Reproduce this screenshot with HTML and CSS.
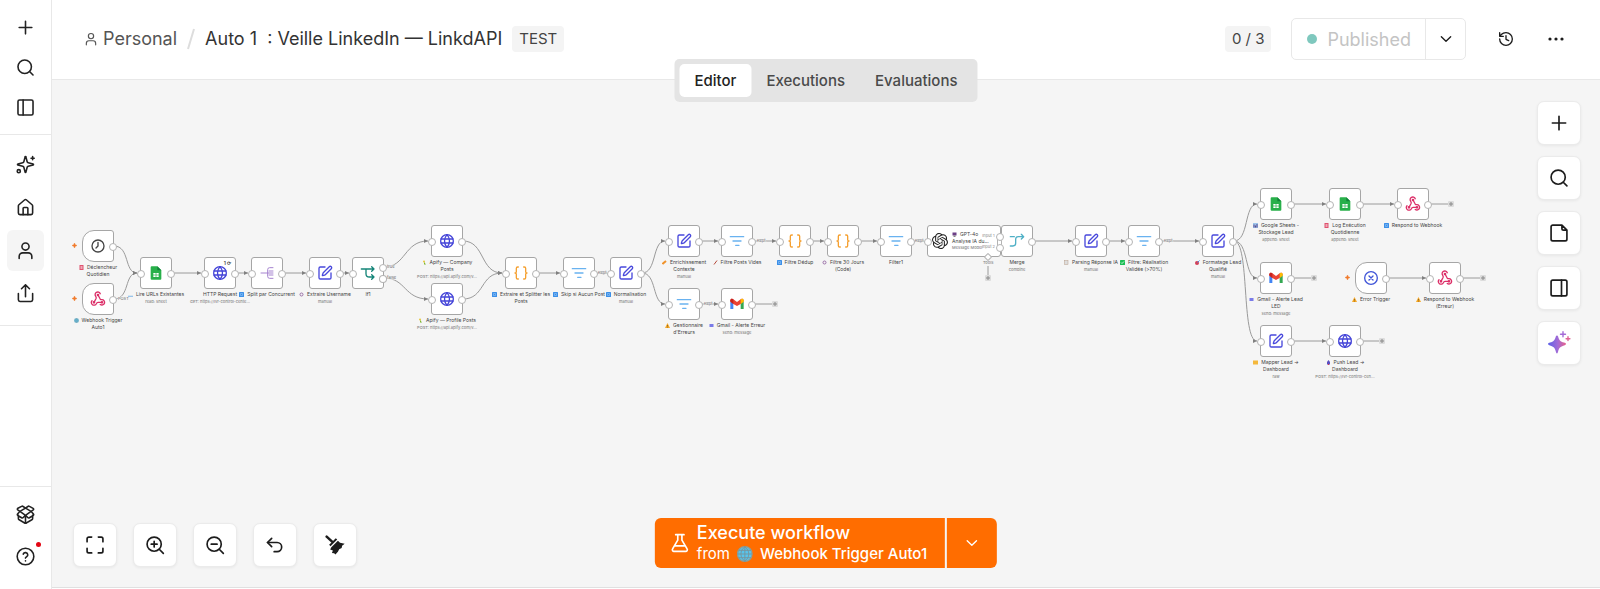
FILE: index.html
```html
<!DOCTYPE html>
<html lang="fr">
<head>
<meta charset="utf-8">
<meta name="viewport" content="width=device-width, initial-scale=1">
<title>Auto 1 : Veille LinkedIn — LinkdAPI</title>
<link rel="stylesheet" href="styles.css">
</head>
<body>
<svg class="sprite" aria-hidden="true">
  <defs>
    <linearGradient id="ai" x1="0" y1="0" x2="1" y2="0"><stop offset="0" stop-color="#5b60e8"/><stop offset=".55" stop-color="#a36bd6"/><stop offset="1" stop-color="#e8608a"/></linearGradient>
    <marker id="arrow" viewBox="0 0 4 4" refX="4" refY="2" markerWidth="4" markerHeight="4" markerUnits="userSpaceOnUse" orient="auto"><path d="M0 0L4 2L0 4Z" fill="#808080"/></marker>
    <symbol id="plus" viewBox="0 0 24 24"><path d="M4 12h16M12 4v16"/></symbol>
    <symbol id="search" viewBox="0 0 24 24"><circle cx="11" cy="11" r="8.500"/><path d="m21.500 21.500-4.400-4.400"/></symbol>
    <symbol id="panel-left" viewBox="0 0 24 24"><rect x="2.500" y="2.500" width="19" height="19" rx="2"/><path d="M9 2.500v19"/></symbol>
    <symbol id="panel-right" viewBox="0 0 24 24"><rect x="2.500" y="2.500" width="19" height="19" rx="2"/><path d="M15 2.500v19"/></symbol>
    <symbol id="sparkles" viewBox="0 0 24 24"><path d="M9.900 15.500A2 2 0 0 0 8.500 14.100l-6.100-1.600a.5.5 0 0 1 0-1L8.500 9.900A2 2 0 0 0 9.900 8.500l1.600-6.100a.5.5 0 0 1 1 0l1.600 6.100a2 2 0 0 0 1.400 1.400l6.100 1.600a.5.5 0 0 1 0 1l-6.100 1.600a2 2 0 0 0-1.400 1.400l-1.600 6.100a.5.5 0 0 1-1 0z"/><path d="M21 2v4M23 4h-4"/><circle cx="3.500" cy="20.500" r="2"/></symbol>
    <symbol id="home" viewBox="0 0 24 24"><path d="M15 21v-8a1 1 0 0 0-1-1h-4a1 1 0 0 0-1 1v8"/><path d="M3 10a2 2 0 0 1 .7-1.500l7-6a2 2 0 0 1 2.600 0l7 6A2 2 0 0 1 21 10v9a2 2 0 0 1-2 2H5a2 2 0 0 1-2-2z"/></symbol>
    <symbol id="user" viewBox="0 0 24 24"><circle cx="12" cy="7" r="4.500"/><path d="M4 22v-2.500a4.500 4.500 0 0 1 4.500-4.500h7a4.500 4.500 0 0 1 4.500 4.500V22"/></symbol>
    <symbol id="share" viewBox="0 0 24 24"><path d="M12 16V2M7 6l5-5 5 5M3 12v8a2 2 0 0 0 2 2h14a2 2 0 0 0 2-2v-8"/></symbol>
    <symbol id="box" viewBox="0 0 24 24"><path d="M12 22V13M15.200 21.400l4.800-2.700a2 2 0 0 0 1-1.700v-4M3 13v4a2 2 0 0 0 1 1.700l6.900 4a2 2 0 0 0 2.200 0l2.100-1.300M12 13l-2.900 2.800a1.600 1.600 0 0 1-2 .3L2.200 13.200a1.200 1.200 0 0 1-.2-1.800L5 8l7 5 7-5 3 3.400a1.200 1.200 0 0 1-.2 1.800l-4.900 2.900a1.600 1.600 0 0 1-2-.3zM5 8 2.200 6.200a1.200 1.200 0 0 1 .2-2L7 1.700a1.600 1.600 0 0 1 2 .2L12 4l3-2.100a1.600 1.600 0 0 1 2-.2l4.600 2.500a1.200 1.200 0 0 1 .2 2L19 8l-7-4z"/></symbol>
    <symbol id="help" viewBox="0 0 24 24"><circle cx="12" cy="12" r="10.500"/><path d="M9.100 9a3 3 0 0 1 5.800 1c0 2-3 2.600-3 4M12 17.500v.1"/></symbol>
    <symbol id="chevron" viewBox="0 0 24 24"><path d="m5 8.500 7 7 7-7"/></symbol>
    <symbol id="history" viewBox="0 0 24 24"><path d="M2.500 12A9.500 9.500 0 1 0 12 2.500a10.300 10.300 0 0 0-7.100 2.900L2.500 8M2.500 2.500V8H8M12 7v5.500l4 2"/></symbol>
    <symbol id="dots" viewBox="0 0 24 24"><g fill="currentColor" stroke="none"><circle cx="3" cy="12" r="2.400"/><circle cx="12" cy="12" r="2.400"/><circle cx="21" cy="12" r="2.400"/></g></symbol>
    <symbol id="note" viewBox="0 0 24 24"><path d="M15.500 2.500H4.500a2 2 0 0 0-2 2v15a2 2 0 0 0 2 2h15a2 2 0 0 0 2-2v-11zM15.500 2.500v4a2 2 0 0 0 2 2h4"/></symbol>
    <symbol id="ai-star" viewBox="0 0 24 24"><g fill="url(#ai)" stroke="none"><path d="M10 4.500c.5 0 .9.300 1.100 1 .9 3.700 2.200 5 5.900 6.100 1 .3 2 .8 2 1.400s-1 1.100-2 1.400c-3.700 1.100-5 2.400-5.900 6.100-.3 1-.6 2-1.100 2s-.9-1-1.200-2c-.9-3.700-2.100-5-5.800-6.100-1-.3-2-.8-2-1.400s1-1.100 2-1.400c3.700-1.100 4.900-2.400 5.800-6.100.2-.7.700-1 1.200-1z"/></g><path d="M16 .8v5M13.500 3.300h5" stroke="#a36bd6" stroke-width="1.400"/><path d="M21 5.800v3.800M19.100 7.700h3.800" stroke="#df6395" stroke-width="1.400"/></symbol>
    <symbol id="fit" viewBox="0 0 24 24"><path d="M8 2.500H4.500a2 2 0 0 0-2 2V8M21.500 8V4.500a2 2 0 0 0-2-2H16M2.500 16v3.500a2 2 0 0 0 2 2H8M16 21.500h3.500a2 2 0 0 0 2-2V16"/></symbol>
    <symbol id="zoom-in" viewBox="0 0 24 24"><circle cx="11" cy="11" r="8.500"/><path d="m22 22-4.900-4.900M11 7.500v7M7.500 11h7"/></symbol>
    <symbol id="zoom-out" viewBox="0 0 24 24"><circle cx="11" cy="11" r="8.500"/><path d="m22 22-4.900-4.900M7.500 11h7"/></symbol>
    <symbol id="undo" viewBox="0 0 24 24"><path d="M8 14 3 9l5-5"/><path d="M3 9h11.500a5.500 5.500 0 0 1 0 11H11"/></symbol>
    <symbol id="broom" viewBox="0 0 24 24"><path d="M2 2 8.500 8" stroke-width="3"/><path d="M13.800 4.600 5.800 12.600" stroke-width="2.400" stroke-linecap="butt"/><path d="M15.500 6.800 18 9.200 23.600 10.600 20.500 13 20 15.500 17 17 15.500 20 12.500 23.500 11 21.800 8.300 21.500 9.500 18.500 6.200 17.500 7.600 14.700z" fill="currentColor" stroke="none"/></symbol>
    <symbol id="flask" viewBox="0 0 24 24"><path d="M14.500 2v6.500l6.200 10.600A1.900 1.900 0 0 1 19 22H5a1.900 1.900 0 0 1-1.700-2.900L9.500 8.500V2M7 2h10M6.500 15.500h11"/></symbol>
    <symbol id="globe-emoji" viewBox="0 0 24 24"><circle cx="12" cy="12" r="11" fill="#58c4ec" stroke="#8a9f9b"/><path d="M12 1v22M1 12h22M3 6.500h18M3 17.500h18M12 1c-8 6-8 16 0 22M12 1c8 6 8 16 0 22" stroke="#7a9298" stroke-width="1.300"/></symbol>

    <symbol id="n-clock" viewBox="0 0 24 24"><circle cx="12" cy="12" r="9" stroke="#444"/><path d="M12 6.500V12l-3 3" stroke="#444"/></symbol>
    <symbol id="n-hook" viewBox="0 0 24 24"><g stroke="#dc2f68"><path d="M18 17h-6c-1.100 0-2 .9-2.500 2A4 4 0 1 1 3 14.500"/><circle cx="6" cy="17" r="1"/><path d="m6 17 3.100-5.800c.5-1 .1-2.200-.5-3.100a4 4 0 1 1 6.800-4"/><circle cx="12" cy="6" r="1"/><path d="m12 6 3.100 5.700c.6 1 1.700 1.300 2.800 1.300a4 4 0 1 1-2.500 7.100"/><circle cx="18" cy="17" r="1"/></g></symbol>
    <symbol id="n-sheet" viewBox="0 0 24 24"><path d="M4 3.500A1.500 1.500 0 0 1 5.500 2H14l6 6v12.500a1.500 1.500 0 0 1-1.500 1.500h-13A1.500 1.500 0 0 1 4 20.500z" fill="#28b04a" stroke="none"/><path d="M14 2l6 6h-6z" fill="#12823a" stroke="none"/><rect x="8" y="12" width="8" height="6" fill="#fff" stroke="none"/><path d="M8 15h8M12 12v6" stroke="#28b04a" stroke-width="1"/></symbol>
    <symbol id="n-globe" viewBox="0 0 24 24"><g stroke="#4343d8"><circle cx="12" cy="12" r="9.500"/><path d="M12 2.500a14 14 0 0 0 0 19 14 14 0 0 0 0-19M3 9h18M3 15h18"/></g></symbol>
    <symbol id="n-split" viewBox="0 0 24 24"><path d="M3 12h18M21 4h-5a3 3 0 0 0-3 3v10a3 3 0 0 0 3 3h5M15 9h6M15 15h6" stroke="#a583cf" stroke-width="1.500"/></symbol>
    <symbol id="n-edit" viewBox="0 0 24 24"><g stroke="#4848dc"><path d="M12 3H5a2 2 0 0 0-2 2v14a2 2 0 0 0 2 2h14a2 2 0 0 0 2-2v-7"/><path d="M18.400 2.600a2.100 2.100 0 0 1 3 3l-9 9a2 2 0 0 1-.9.500l-2.900.9a.5.5 0 0 1-.6-.6l.9-2.900a2 2 0 0 1 .5-.9z"/></g></symbol>
    <symbol id="n-if" viewBox="0 0 24 24"><path d="M2 6h19M17.500 2.500 21 6l-3.500 3.500M9 6v7a5 5 0 0 0 5 5h7M17.500 14.500 21 18l-3.500 3.500" stroke="#158578"/></symbol>
    <symbol id="n-code" viewBox="0 0 24 24"><path d="M8 3H7a2 2 0 0 0-2 2v5a2 2 0 0 1-2 2 2 2 0 0 1 2 2v5a2 2 0 0 0 2 2h1M16 21h1a2 2 0 0 0 2-2v-5a2 2 0 0 1 2-2 2 2 0 0 1-2-2V5a2 2 0 0 0-2-2h-1" stroke="#f5a030"/></symbol>
    <symbol id="n-filter" viewBox="0 0 24 24"><path d="M2 5.500h20M6 12h12M10 18.500h5" stroke="#69b2f0"/></symbol>
    <symbol id="n-gmail" viewBox="0 0 24 24"><g stroke="none"><path d="M2 8v11.500h4.500V11z" fill="#4285f4"/><path d="M22 8v11.500h-4.500V11z" fill="#34a853"/><path d="M2 6.500C2 4 4.600 3.500 6 4.600l6 4.500 6-4.500c1.400-1.100 4-.6 4 1.900V8l-4.500 4L12 15l-5.500-3L2 8z" fill="#ea4335"/><path d="M17.500 5v7L22 8.500v-2C22 4 19.500 3.400 17.500 5z" fill="#fbbc04"/><path d="M2 6.500v2L6.500 12V5C4.500 3.500 2 4 2 6.500z" fill="#c5221f"/></g></symbol>
    <symbol id="n-openai" viewBox="0 0 24 24"><path d="M22.282 9.821a5.985 5.985 0 0 0-.516-4.910 6.046 6.046 0 0 0-6.510-2.900A6.065 6.065 0 0 0 4.981 4.180a5.985 5.985 0 0 0-3.998 2.900 6.046 6.046 0 0 0 .743 7.097 5.980 5.980 0 0 0 .510 4.911 6.051 6.051 0 0 0 6.515 2.900A5.985 5.985 0 0 0 13.260 24a6.056 6.056 0 0 0 5.772-4.206 5.990 5.990 0 0 0 3.998-2.900 6.056 6.056 0 0 0-.748-7.073zm-9.022 12.609a4.476 4.476 0 0 1-2.876-1.041l.142-.080 4.778-2.758a.795.795 0 0 0 .393-.681v-6.737l2.020 1.169a.071.071 0 0 1 .038.052v5.583a4.504 4.504 0 0 1-4.495 4.493zM3.600 18.304a4.471 4.471 0 0 1-.535-3.014l.142.085 4.783 2.758a.771.771 0 0 0 .780 0l5.843-3.368v2.332a.080.080 0 0 1-.033.062L9.740 19.950a4.500 4.500 0 0 1-6.140-1.646zM2.341 7.896a4.485 4.485 0 0 1 2.365-1.973V11.600a.766.766 0 0 0 .388.676l5.815 3.355-2.020 1.168a.076.076 0 0 1-.071 0l-4.830-2.786A4.504 4.504 0 0 1 2.341 7.872zm16.596 3.856-5.833-3.387L15.119 7.200a.076.076 0 0 1 .071 0l4.830 2.791a4.494 4.494 0 0 1-.676 8.105v-5.678a.790.790 0 0 0-.407-.667zm2.010-3.023-.141-.085-4.774-2.782a.776.776 0 0 0-.785 0L9.409 9.230V6.897a.066.066 0 0 1 .028-.061l4.830-2.787a4.500 4.500 0 0 1 6.680 4.660zM8.307 12.863l-2.020-1.164a.080.080 0 0 1-.038-.057V6.074a4.500 4.500 0 0 1 7.375-3.453l-.142.080L8.704 5.459a.795.795 0 0 0-.393.681zm1.097-2.365 2.602-1.500 2.607 1.500v3l-2.597 1.500-2.607-1.500z" fill="#222" stroke="none"/></symbol>
    <symbol id="n-merge" viewBox="0 0 24 24"><path d="M2 19.500h4a4 4 0 0 0 4-4V9a4 4 0 0 1 4-3.500h8M18.500 2 22 5.500 18.500 9M2 5.500h6" stroke="#4fb0c6"/></symbol>
    <symbol id="n-error" viewBox="0 0 24 24"><path d="m9 9 6 6M15 9l-6 6" stroke="#4055d8"/><circle cx="12" cy="12" r="9.500" stroke="#4055d8"/></symbol>

    <symbol id="e-red" viewBox="0 0 10 10"><rect x="1" width="8" height="10" fill="#e0526f"/><path d="M3 3h4M3 5h4M3 7h4" stroke="#fff"/></symbol>
    <symbol id="e-chart" viewBox="0 0 10 10"><path d="M0 8.500h10" stroke="#7db5e6" stroke-width="2"/></symbol>
    <symbol id="e-key" viewBox="0 0 10 10"><rect width="10" height="10" rx="1" fill="#3b8fe8"/><path d="M3 3h4v4H3z" stroke="#a9d0f8"/></symbol>
    <symbol id="e-gear" viewBox="0 0 10 10"><circle cx="5" cy="5" r="3" stroke="#9a70a8" stroke-width="2"/></symbol>
    <symbol id="e-leaf" viewBox="0 0 10 10"><path d="M4 1v8h4L5 5z" fill="#7bb62f"/><circle cx="4" cy="3" r="2" fill="#e7c93c"/></symbol>
    <symbol id="e-link" viewBox="0 0 10 10"><path d="M1 8 8 2" stroke="#f0932b" stroke-width="4"/></symbol>
    <symbol id="e-brush" viewBox="0 0 10 10"><path d="M2 9 8 1" stroke="#b5483a" stroke-width="2"/></symbol>
    <symbol id="e-warn" viewBox="0 0 10 10"><path d="M5 0 10 10H0z" fill="#f5a623"/><path d="M5 4v3M5 8v1" stroke="#333"/></symbol>
    <symbol id="e-mail" viewBox="0 0 10 10"><rect x="1" y="2" width="8" height="6" fill="#7a7be8"/></symbol>
    <symbol id="e-robot" viewBox="0 0 10 10"><rect x="1" y="1" width="8" height="6" fill="#6c3f86"/><rect x="3" y="7" width="4" height="3" fill="#888"/></symbol>
    <symbol id="e-doc" viewBox="0 0 10 10"><rect x="1" y="1" width="7" height="8" fill="#ddd" stroke="#b79d8a"/></symbol>
    <symbol id="e-check" viewBox="0 0 10 10"><rect width="10" height="10" rx="1" fill="#1dbf56"/><path d="m2 5 2 2 4-4" stroke="#fff" stroke-width="1.500"/></symbol>
    <symbol id="e-target" viewBox="0 0 10 10"><circle cx="4" cy="6" r="4" fill="#d23f57"/><path d="m5 5 4-4" stroke="#3b8fe8" stroke-width="2"/></symbol>
    <symbol id="e-bars" viewBox="0 0 10 10"><rect width="10" height="10" fill="#9cc4ea"/><path d="M2 9V3M5 9V5M8 9V2" stroke="#5b4a90" stroke-width="2"/></symbol>
    <symbol id="e-folder" viewBox="0 0 10 10"><rect y="1" width="10" height="8" fill="#f4b83c"/></symbol>
    <symbol id="e-rocket" viewBox="0 0 10 10"><path d="M5 0 8 4v5H2V4z" fill="#5a4fc0"/><path d="M4 9h2" stroke="#d34" stroke-width="2"/></symbol>
    <symbol id="bolt" viewBox="0 0 10 10"><path d="M5 0 6.500 3.500 10 5 6.500 6.500 5 10 3.500 6.500 0 5 3.500 3.500z" fill="#f07b2c" stroke="#f07b2c"/></symbol>
  </defs>
</svg>

<div class="app">
  <aside class="sidebar">
    <nav class="rail rail-top" aria-label="Actions">
      <button class="rail-btn" aria-label="New"><svg class="icon"><use href="#plus"/></svg></button>
      <button class="rail-btn" aria-label="Search"><svg class="icon"><use href="#search"/></svg></button>
      <button class="rail-btn" aria-label="Toggle sidebar"><svg class="icon"><use href="#panel-left"/></svg></button>
    </nav>
    <nav class="rail rail-main" aria-label="Navigation">
      <a class="rail-btn" href="#chat" aria-label="Chat"><svg class="icon"><use href="#sparkles"/></svg></a>
      <a class="rail-btn" href="#overview" aria-label="Overview"><svg class="icon"><use href="#home"/></svg></a>
      <a class="rail-btn rail-btn-active" href="#personal" aria-label="Personal"><svg class="icon"><use href="#user"/></svg></a>
      <a class="rail-btn" href="#shared" aria-label="Shared with you"><svg class="icon"><use href="#share"/></svg></a>
    </nav>
    <nav class="rail rail-foot" aria-label="Resources">
      <a class="rail-btn" href="#templates" aria-label="Templates"><svg class="icon"><use href="#box"/></svg></a>
      <a class="rail-btn" href="#support" aria-label="Help"><svg class="icon"><use href="#help"/></svg><span class="alert-dot"></span></a>
    </nav>
  </aside>

  <main class="workspace">
    <header class="header">
      <nav class="crumbs" aria-label="Breadcrumb">
        <a class="crumb" href="#personal"><svg class="icon icon-s"><use href="#user"/></svg>Personal</a>
        <svg class="slash" viewBox="0 0 8 22"><path d="M7 1 1 21"/></svg>
        <h1 class="title">Auto 1 &nbsp;: Veille LinkedIn — LinkdAPI</h1>
        <span class="tag">TEST</span>
      </nav>
      <div class="header-actions">
        <span class="tag">0 / 3</span>
        <div class="publish">
          <button class="publish-main" disabled><span class="status-dot"></span>Published</button>
          <button class="publish-more" aria-label="Publish options"><svg class="icon icon-m"><use href="#chevron"/></svg></button>
        </div>
        <button class="plain-btn" aria-label="Version history"><svg class="icon icon-m"><use href="#history"/></svg></button>
        <button class="plain-btn" aria-label="More"><svg class="icon icon-m"><use href="#dots"/></svg></button>
      </div>
      <div class="tabs" role="tablist">
        <button class="tab tab-active" role="tab" aria-selected="true">Editor</button>
        <button class="tab" role="tab" aria-selected="false">Executions</button>
        <button class="tab" role="tab" aria-selected="false">Evaluations</button>
      </div>
    </header>

    <section class="canvas" aria-label="Workflow">
      <div class="board">
      <svg class="wires">
        <g marker-end="url(#arrow)">
          <path d="M61 166C77 166 71 193 84 193"/><path d="M61 219C77 219 71 193 84 193"/>
          <path d="M119 193H148"/><path d="M183 193H195"/><path d="M230 193H253"/><path d="M288 193H296"/>
          <path d="M331 187C353 187 351 161 375 161"/><path d="M331 198C353 198 351 219 375 219"/>
          <path d="M410 161C432 161 427 193 449 193"/><path d="M410 219C432 219 427 193 449 193"/>
          <path d="M484 193H507"/><path d="M542 193H554"/>
          <path d="M589 193C604 193 599 161 612 161"/><path d="M589 193C604 193 599 224 612 224"/>
          <path d="M647 161H665"/><path d="M700 161H723"/><path d="M758 161H771"/><path d="M806 161H824"/><path d="M859 161H871"/>
          <path d="M647 224H665"/>
          <path d="M980 161H1019"/><path d="M1054 161H1072"/><path d="M1107 161H1146"/>
          <path d="M1181 161C1196 161 1191 124 1204 124"/><path d="M1181 161C1196 161 1191 198 1204 198"/><path d="M1181 161C1197 161 1188 261 1204 261"/>
          <path d="M1239 124H1273"/><path d="M1308 124H1341"/><path d="M1239 261H1273"/><path d="M1334 198H1373"/>
        </g>
        <path d="M700 224H719M1376 124H1396M1239 198H1259M1408 198H1427M1308 261H1327M935 178V196"/>
        <g class="ends">
          <g id="end"><rect x="719" y="221" width="6" height="6" rx="1"/><path d="M720 224h4M722 222v4"/></g>
          <use href="#end" x="676" y="-100"/><use href="#end" x="539" y="-26"/><use href="#end" x="708" y="-26"/><use href="#end" x="607" y="37"/><use href="#end" x="213" y="-26"/>
        </g>
        <g class="wire-text">
          <text x="65" y="220">POST</text><text x="334" y="188">true</text><text x="334" y="199">false</text>
          <text x="545" y="194">Kept</text><text x="704" y="162">Kept</text><text x="651" y="225">Kept</text><text x="862" y="162">Kept</text><text x="1111" y="162">Kept</text>
        </g>
      </svg>

      <article class="node node-trigger" style="left:29px;top:150px"><svg class="bolt"><use href="#bolt"/></svg><div class="box"><svg><use href="#n-clock"/></svg></div><p><svg class="emo"><use href="#e-red"/></svg>Déclencheur<br>Quotidien</p></article>
      <article class="node node-trigger" style="left:29px;top:203px"><svg class="bolt"><use href="#bolt"/></svg><div class="box"><svg><use href="#n-hook"/></svg></div><p><svg class="emo"><use href="#globe-emoji"/></svg>Webhook Trigger<br>Auto1</p></article>
      <article class="node" style="left:87px;top:177px"><div class="box"><svg><use href="#n-sheet"/></svg></div><p><svg class="emo"><use href="#e-chart"/></svg>Lire URLs Existantes</p><small>read: sheet</small></article>
      <article class="node" style="left:151px;top:177px"><div class="box"><span class="flags">1 ⟳</span><svg><use href="#n-globe"/></svg></div><p>HTTP Request</p><small>GET: https://lvr-control-cente...</small></article>
      <article class="node" style="left:198px;top:177px"><div class="box"><svg><use href="#n-split"/></svg></div><p><svg class="emo"><use href="#e-key"/></svg>Split par Concurrent</p></article>
      <article class="node" style="left:256px;top:177px"><div class="box"><svg><use href="#n-edit"/></svg></div><p><svg class="emo"><use href="#e-gear"/></svg>Extraire Username</p><small>manual</small></article>
      <article class="node node-if" style="left:299px;top:177px"><div class="box"><svg><use href="#n-if"/></svg></div><p>If1</p></article>
      <article class="node" style="left:378px;top:145px"><div class="box"><svg><use href="#n-globe"/></svg></div><p><svg class="emo"><use href="#e-leaf"/></svg>Apify — Company<br>Posts</p><small>POST: https://api.apify.com/v...</small></article>
      <article class="node" style="left:378px;top:203px"><div class="box"><svg><use href="#n-globe"/></svg></div><p><svg class="emo"><use href="#e-leaf"/></svg>Apify — Profile Posts</p><small>POST: https://api.apify.com/v...</small></article>
      <article class="node" style="left:452px;top:177px"><div class="box"><svg><use href="#n-code"/></svg></div><p><svg class="emo"><use href="#e-key"/></svg>Extraire et Splitter les<br>Posts</p></article>
      <article class="node" style="left:510px;top:177px"><div class="box"><svg><use href="#n-filter"/></svg></div><p><svg class="emo"><use href="#e-key"/></svg>Skip si Aucun Post</p></article>
      <article class="node" style="left:557px;top:177px"><div class="box"><svg><use href="#n-edit"/></svg></div><p><svg class="emo"><use href="#e-key"/></svg>Normalisation</p><small>manual</small></article>
      <article class="node" style="left:615px;top:145px"><div class="box"><svg><use href="#n-edit"/></svg></div><p><svg class="emo"><use href="#e-link"/></svg>Enrichissement<br>Contexte</p><small>manual</small></article>
      <article class="node" style="left:668px;top:145px"><div class="box"><svg><use href="#n-filter"/></svg></div><p><svg class="emo"><use href="#e-brush"/></svg>Filtre Posts Vides</p></article>
      <article class="node" style="left:726px;top:145px"><div class="box"><svg><use href="#n-code"/></svg></div><p><svg class="emo"><use href="#e-key"/></svg>Filtre Dédup</p></article>
      <article class="node" style="left:774px;top:145px"><div class="box"><svg><use href="#n-code"/></svg></div><p><svg class="emo"><use href="#e-gear"/></svg>Filtre 30 Jours<br>(Code)</p></article>
      <article class="node" style="left:827px;top:145px"><div class="box"><svg><use href="#n-filter"/></svg></div><p>Filter1</p></article>
      <article class="node" style="left:615px;top:208px"><div class="box"><svg><use href="#n-filter"/></svg></div><p><svg class="emo"><use href="#e-warn"/></svg>Gestionnaire<br>d'Erreurs</p></article>
      <article class="node" style="left:668px;top:208px"><div class="box"><svg><use href="#n-gmail"/></svg></div><p><svg class="emo"><use href="#e-mail"/></svg>Gmail - Alerte Erreur</p><small>send: message</small></article>
      <article class="node node-agent" style="left:874px;top:145px"><div class="box"><svg><use href="#n-openai"/></svg><div class="agent-text"><p><svg class="emo"><use href="#e-robot"/></svg>GPT-4o<br>Analyse IA du...</p><small>Message Model</small></div></div><span class="tool-port"></span><small class="tool-label">Tools</small></article>
      <article class="node node-merge" style="left:948px;top:145px"><div class="inputs"><small>Input 1</small><small>Input 2</small></div><div class="box"><svg><use href="#n-merge"/></svg></div><p>Merge</p><small>combine</small></article>
      <article class="node" style="left:1022px;top:145px"><div class="box"><svg><use href="#n-edit"/></svg></div><p><svg class="emo"><use href="#e-doc"/></svg>Parsing Réponse IA</p><small>manual</small></article>
      <article class="node" style="left:1075px;top:145px"><div class="box"><svg><use href="#n-filter"/></svg></div><p><svg class="emo"><use href="#e-check"/></svg>Filtre: Réalisation<br>Validée (&gt;70%)</p></article>
      <article class="node" style="left:1149px;top:145px"><div class="box"><svg><use href="#n-edit"/></svg></div><p><svg class="emo"><use href="#e-target"/></svg>Formatage Lead<br>Qualifié</p><small>manual</small></article>
      <article class="node" style="left:1207px;top:108px"><div class="box"><svg><use href="#n-sheet"/></svg></div><p><svg class="emo"><use href="#e-bars"/></svg>Google Sheets -<br>Stockage Lead</p><small>append: sheet</small></article>
      <article class="node" style="left:1276px;top:108px"><div class="box"><svg><use href="#n-sheet"/></svg></div><p><svg class="emo"><use href="#e-red"/></svg>Log Exécution<br>Quotidienne</p><small>append: sheet</small></article>
      <article class="node" style="left:1344px;top:108px"><div class="box"><svg><use href="#n-hook"/></svg></div><p><svg class="emo"><use href="#e-key"/></svg>Respond to Webhook</p></article>
      <article class="node" style="left:1207px;top:182px"><div class="box"><svg><use href="#n-gmail"/></svg></div><p><svg class="emo"><use href="#e-mail"/></svg>Gmail - Alerte Lead<br>LED</p><small>send: message</small></article>
      <article class="node node-trigger" style="left:1302px;top:182px"><svg class="bolt"><use href="#bolt"/></svg><div class="box"><svg><use href="#n-error"/></svg></div><p><svg class="emo"><use href="#e-warn"/></svg>Error Trigger</p></article>
      <article class="node" style="left:1376px;top:182px"><div class="box"><svg><use href="#n-hook"/></svg></div><p><svg class="emo"><use href="#e-warn"/></svg>Respond to Webhook<br>(Erreur)</p></article>
      <article class="node" style="left:1207px;top:245px"><div class="box"><svg><use href="#n-edit"/></svg></div><p><svg class="emo"><use href="#e-folder"/></svg>Mapper Lead →<br>Dashboard</p><small>raw</small></article>
      <article class="node" style="left:1276px;top:245px"><div class="box"><svg><use href="#n-globe"/></svg></div><p><svg class="emo"><use href="#e-rocket"/></svg>Push Lead →<br>Dashboard</p><small>POST: https://lvr-control-cen...</small></article>
      </div>

      <div class="tools tools-right">
        <button class="tool" aria-label="Add node"><svg class="icon"><use href="#plus"/></svg></button>
        <button class="tool" aria-label="Search nodes"><svg class="icon"><use href="#search"/></svg></button>
        <button class="tool" aria-label="Add note"><svg class="icon"><use href="#note"/></svg></button>
        <button class="tool" aria-label="Toggle panel"><svg class="icon"><use href="#panel-right"/></svg></button>
        <button class="tool" aria-label="Assistant"><svg class="icon icon-l"><use href="#ai-star"/></svg></button>
      </div>
      <div class="tools tools-bottom">
        <button class="tool" aria-label="Fit view"><svg class="icon"><use href="#fit"/></svg></button>
        <button class="tool" aria-label="Zoom in"><svg class="icon"><use href="#zoom-in"/></svg></button>
        <button class="tool" aria-label="Zoom out"><svg class="icon"><use href="#zoom-out"/></svg></button>
        <button class="tool" aria-label="Undo"><svg class="icon"><use href="#undo"/></svg></button>
        <button class="tool" aria-label="Tidy up"><svg class="icon"><use href="#broom"/></svg></button>
      </div>
      <div class="execute">
        <button class="execute-main">
          <svg class="icon"><use href="#flask"/></svg>
          <span class="execute-text">
            <span class="execute-title">Execute workflow</span>
            <span class="execute-from">from <svg class="icon icon-m"><use href="#globe-emoji"/></svg> <b>Webhook Trigger Auto1</b></span>
          </span>
        </button>
        <button class="execute-more" aria-label="Choose trigger"><svg class="icon icon-m"><use href="#chevron"/></svg></button>
      </div>
    </section>
  </main>
</div>
</body>
</html>
```
FILE: styles.css
```css
* { box-sizing: border-box; }
body {
  margin: 0;
  font-family: Inter, "Liberation Sans", sans-serif;
  font-size: 16px;
  color: #333;
  background: #fff;
}
button { font: inherit; color: inherit; background: none; border: 0; padding: 0; margin: 0; }
a { color: inherit; text-decoration: none; }
p, h1 { margin: 0; font-weight: 400; }
svg { fill: none; flex: none; }
.sprite { position: absolute; width: 0; height: 0; }
.icon {
  width: 20px;
  height: 20px;
  stroke: currentColor;
  stroke-width: 2;
  stroke-linecap: round;
  stroke-linejoin: round;
}
.icon-s { width: 14px; height: 14px; }
.icon-m { width: 16px; height: 16px; }
.icon-l { width: 24px; height: 24px; }

.app { display: flex; min-height: 100vh; }

/* Sidebar */
.sidebar {
  display: flex;
  flex-direction: column;
  width: 52px;
  border-right: 1px solid #e8e8e8;
  color: #222;
}
.rail { display: flex; flex-direction: column; align-items: center; }
.rail .icon { width: 19px; height: 19px; }
.rail-btn {
  position: relative;
  display: flex;
  align-items: center;
  justify-content: center;
  width: 37px;
  height: 41px;
  border-radius: 6px;
}
.rail-top { padding: 7px 0; border-bottom: 1px solid #e8e8e8; }
.rail-top .rail-btn { height: 40px; }
.rail-main { gap: 2px; padding: 9px 0 11px; border-bottom: 1px solid #e8e8e8; }
.rail-btn-active { background: #f5f5f5; }
.rail-foot { gap: 1px; margin-top: auto; padding: 7px 0 12px; border-top: 1px solid #e8e8e8; }
.alert-dot {
  position: absolute;
  top: 6px;
  right: 3px;
  width: 5px;
  height: 5px;
  border-radius: 50%;
  background: #e30613;
}

/* Header */
.workspace { display: flex; flex: 1; flex-direction: column; min-width: 0; }
.header {
  position: relative;
  z-index: 2;
  display: flex;
  align-items: center;
  justify-content: space-between;
  height: 80px;
  padding: 0 32px 1px;
  border-bottom: 1px solid #e8e8e8;
}
.crumbs { display: flex; align-items: center; gap: 10px; font-size: 18px; line-height: 26px; }
.crumb { display: flex; align-items: center; gap: 5px; color: #555; }
.slash { width: 8px; height: 22px; stroke: #ddd; stroke-width: 2; }
.title { font-size: 18px; white-space: nowrap; }
.tag {
  padding: 0 7px;
  border-radius: 4px;
  background: #f4f4f4;
  font-size: 15px;
  line-height: 26px;
  color: #444;
}
.header-actions { display: flex; align-items: center; }
.publish {
  display: flex;
  height: 42px;
  margin: 0 28px 0 20px;
  border: 1px solid #e8e8e8;
  border-radius: 5px;
}
.publish-main { display: flex; align-items: center; gap: 10px; padding: 0 14px 0 15px; font-size: 18px; color: #c4c4c4; }
.status-dot { width: 10px; height: 10px; border-radius: 50%; background: #7fc8be; }
.publish-more { width: 40px; border-left: 1px solid #e8e8e8; }
.publish-more, .plain-btn, .tool, .execute-more { display: flex; align-items: center; justify-content: center; color: #1c1c1c; }
.plain-btn { width: 24px; height: 32px; }
.plain-btn + .plain-btn { margin-left: 26px; }

.tabs {
  position: absolute;
  top: 59px;
  left: 50%;
  display: flex;
  padding: 5px;
  border-radius: 5px;
  background: #e4e4e4;
  transform: translateX(-50%);
}
.tab { padding: 0 15px; border-radius: 5px; font-size: 15px; font-weight: 500; line-height: 33px; color: #4a4a4a; }
.tab-active { background: #fff; color: #222; }

/* Canvas */
.canvas {
  position: relative;
  flex: 1;
  overflow: hidden;
  margin-bottom: 1px;
  border-bottom: 1px solid #e0e0e0;
  background: #f5f5f5;
}
.board { position: absolute; inset: 0 0 0 1px; }
.wires { position: absolute; inset: 0; width: 100%; height: 100%; stroke: #9a9a9a; stroke-width: 1; }
.ends rect { fill: #dcdcdc; stroke: none; }
.ends path { stroke: #8a8a8a; }
.wire-text { font-size: 4px; fill: #666; stroke: #f5f5f5; stroke-width: 1; paint-order: stroke; }

.node {
  position: absolute;
  display: flex;
  flex-direction: column;
  align-items: center;
  width: 32px;
  font-size: 5px;
  font-weight: 600;
  line-height: 7px;
  text-align: center;
  white-space: nowrap;
  color: #444;
}
.node::before, .node::after, .tool-port, .inputs small::after {
  content: "";
  position: absolute;
  z-index: 1;
  top: 13px;
  width: 6px;
  height: 6px;
  border: 1px solid #b4b4b4;
  border-radius: 50%;
  background: #fff;
}
.node::before { left: -3px; }
.node::after { right: -3px; }
.box {
  position: relative;
  display: flex;
  align-items: center;
  justify-content: center;
  width: 100%;
  height: 32px;
  margin-bottom: 2px;
  border: 1px solid #a6a6a6;
  border-radius: 3px;
  background: #fff;
}
.box > svg { width: 16px; height: 16px; stroke-width: 2; stroke-linecap: round; stroke-linejoin: round; }
.node small { font-size: 4px; font-weight: 500; color: #888; }
.emo { width: 5px; height: 5px; margin-right: 3px; vertical-align: -1px; }
.bolt { position: absolute; top: 13px; left: -10px; width: 5px; height: 5px; }
.flags { position: absolute; top: 2px; right: 4px; font-size: 5px; font-weight: 600; word-spacing: normal; }
.node-trigger .box { border-radius: 12px 3px 3px 12px; }
.node-trigger::before { display: none; }
.node-if::after { top: 7px; box-shadow: 0 11px 0 -1px #fff, 0 11px 0 0 #b4b4b4; }
.node-agent { width: 74px; }
.node-agent .box { justify-content: flex-start; gap: 4px; padding-left: 4px; }
.node-agent::after { border-radius: 0; width: 3px; right: -1px; }
.agent-text { display: flex; flex-direction: column; align-items: flex-start; font-weight: 500; text-align: left; }
.agent-text small { line-height: 6px; }
.tool-port { top: 29px; left: 58px; border-radius: 1px; rotate: 45deg; }
.node .tool-label { position: absolute; top: 35px; left: 56px; background: #f5f5f5; line-height: 6px; }
.node-merge::before { display: none; }
.inputs { position: absolute; z-index: 1; top: 8px; right: 33px; display: flex; flex-direction: column; gap: 6px; }
.node .inputs small { position: relative; padding-right: 5px; font-weight: 400; line-height: 5px; }
.inputs small::after { top: 0; right: -4px; }

/* Floating controls */
.tools { position: absolute; display: flex; }
.tools-right { top: 21px; right: 19px; flex-direction: column; gap: 11px; }
.tools-bottom { bottom: 20px; left: 21px; gap: 16px; }
.tool {
  width: 44px;
  height: 44px;
  border: 1px solid #ebebeb;
  border-radius: 7px;
  background: #fff;
  box-shadow: 0 1px 3px rgba(0, 0, 0, .06);
}
.execute {
  position: absolute;
  bottom: 19px;
  left: 50%;
  display: flex;
  gap: 2px;
  height: 50px;
  transform: translateX(-50%);
  color: #fff;
}
.execute-main {
  display: flex;
  align-items: center;
  gap: 7px;
  padding: 0 18px 0 15px;
  border-radius: 6px 0 0 6px;
  background: #ff6d00;
}
.execute-text { display: flex; flex-direction: column; align-items: flex-start; }
.execute-title { font-size: 18px; font-weight: 500; line-height: 22px; }
.execute-from { display: flex; align-items: center; gap: 7px; font-size: 15px; line-height: 20px; }
.execute-from b { font-weight: 500; }
.execute-more { width: 50px; border-radius: 0 6px 6px 0; background: #ff6d00; color: #fff; }
```
